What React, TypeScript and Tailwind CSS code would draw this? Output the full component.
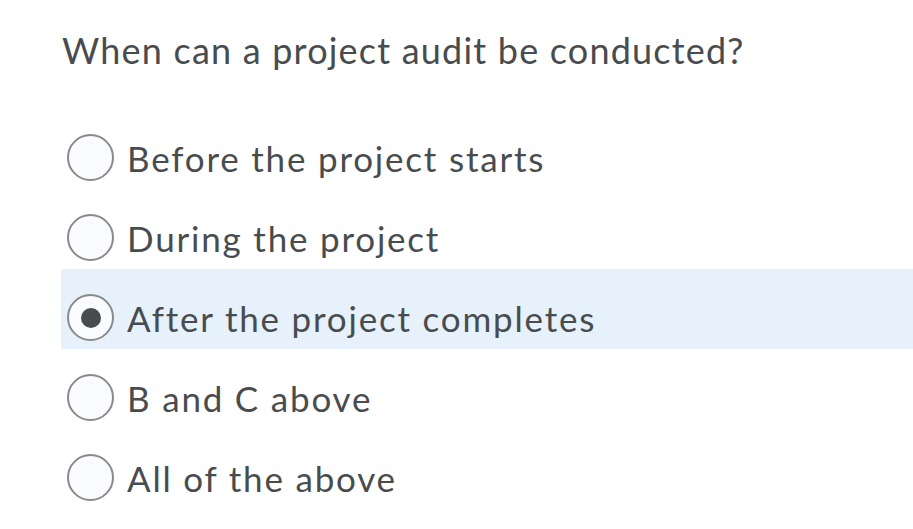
import React from "react";

const options = [
  { label: "Before the project starts", selected: false },
  { label: "During the project", selected: false },
  { label: "After the project completes", selected: true },
  { label: "B and C above", selected: false },
  { label: "All of the above", selected: false },
];

export default function App() {
  return (
    <div
      className="w-[913px] h-[529px] bg-white text-[#494c4e] overflow-hidden"
      style={{ fontFamily: "Lato, 'Open Sans', sans-serif" }}
    >
      <div className="pl-[62px] pt-[29px] text-[36px] leading-[1.2] tracking-[1.2px]">
        When can a project audit be conducted?
      </div>
      <div className="mt-[37px] ml-[61px] flex flex-col">
        {options.map((o) => (
          <div
            key={o.label}
            className={`h-[80px] pt-[25px] pl-[6px] flex items-start ${o.selected ? "bg-[#e6f1fb]" : ""}`}
          >
            <div className="flex items-center gap-[13px]">
              <div className="w-[47px] h-[47px] rounded-full border-2 border-[#8a8a8a] bg-[#f9fbfe] flex items-center justify-center shrink-0">
                {o.selected && <div className="w-[20px] h-[20px] rounded-full bg-[#494c4e]" />}
              </div>
              <span className="text-[35px] leading-[1.2] tracking-[1.8px]">{o.label}</span>
            </div>
          </div>
        ))}
      </div>
    </div>
  );
}
